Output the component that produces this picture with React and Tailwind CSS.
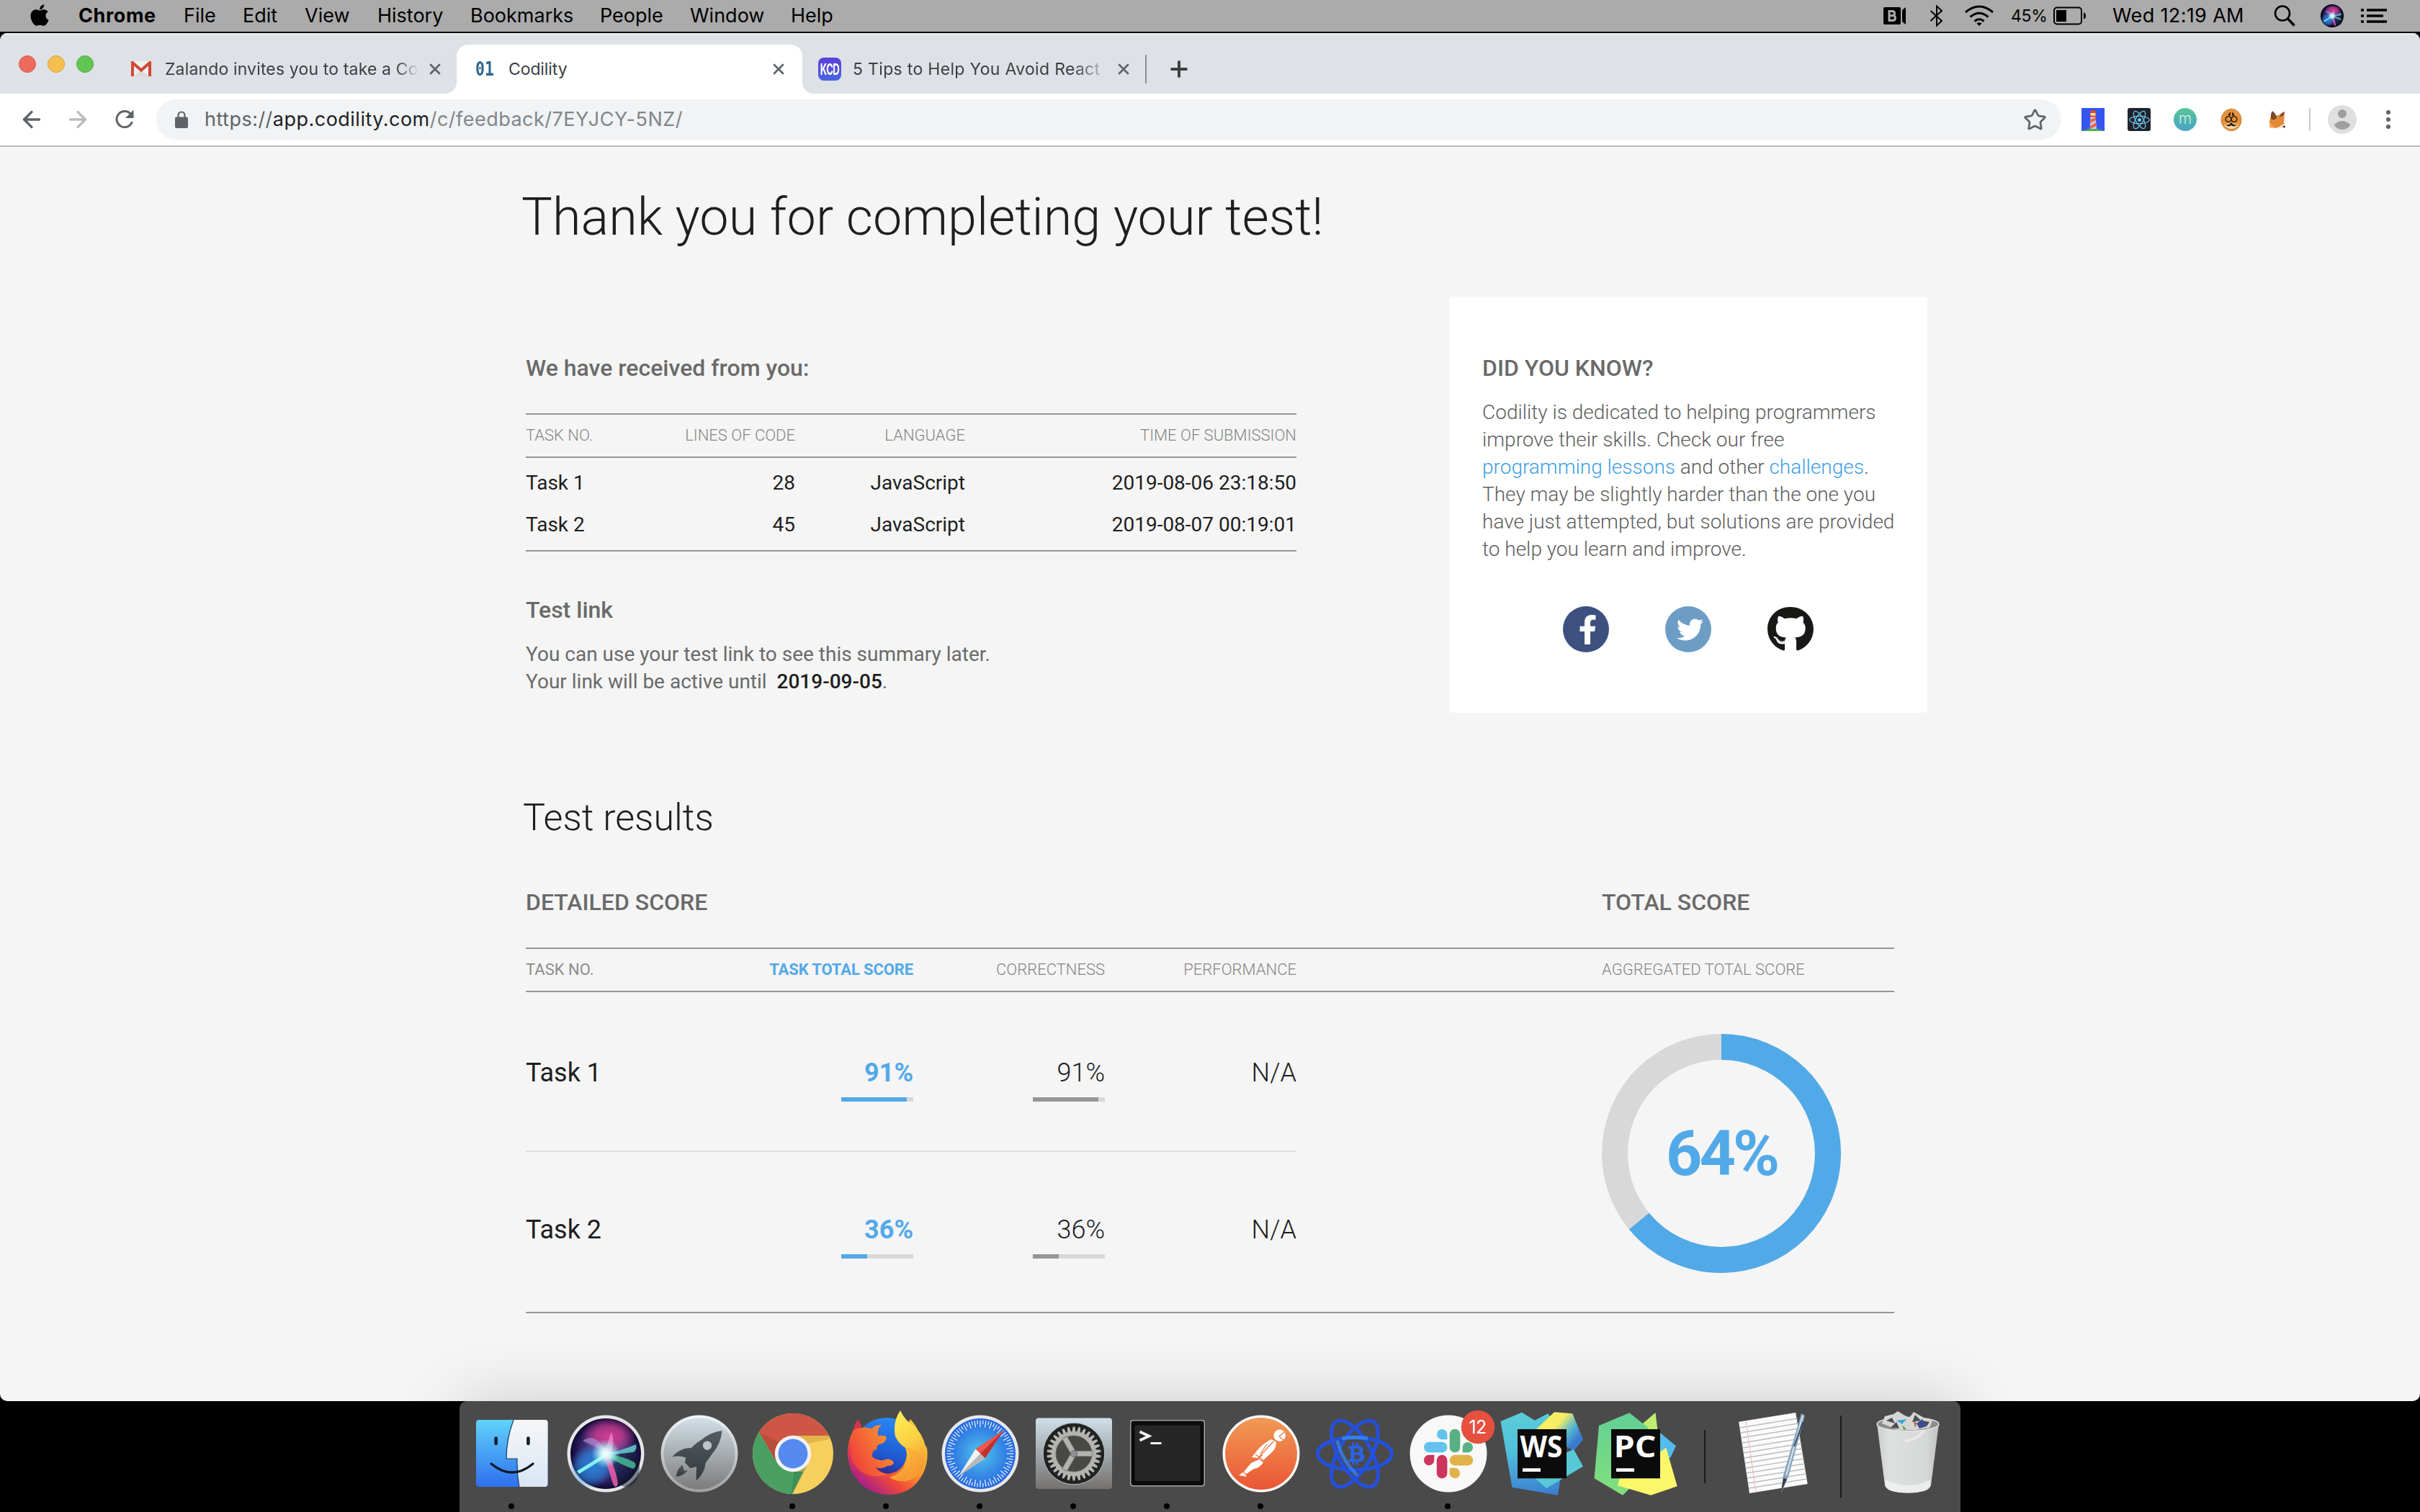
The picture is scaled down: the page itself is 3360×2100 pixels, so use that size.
import React from "react";
import { ArrowLeft, ArrowRight, Plus, Star, X } from "lucide-react";
import { FaApple, FaGithub, FaTwitter, FaReact, FaFacebookF, FaBtc } from "react-icons/fa";

const menus = [
  { label: "Chrome", cls: "w-[146px] font-bold tracking-[0.55px]" },
  { label: "File", cls: "w-[82px]" },
  { label: "Edit", cls: "w-[86px]" },
  { label: "View", cls: "w-[101px]" },
  { label: "History", cls: "w-[129px]" },
  { label: "Bookmarks", cls: "w-[180px]" },
  { label: "People", cls: "w-[125px]" },
  { label: "Window", cls: "w-[140px]" },
  { label: "Help", cls: "" },
];

function SiriOrb({ id }) {
  return (
    <g>
      <defs>
        <radialGradient id={id} cx="0.5" cy="0.5" r="0.5">
          <stop offset="0" stopColor="#5fd0e8" />
          <stop offset="0.35" stopColor="#4a4fa2" />
          <stop offset="0.8" stopColor="#2c1a58" />
          <stop offset="1" stopColor="#0c0a33" />
        </radialGradient>
        <radialGradient id={id + "p"} cx="0.5" cy="0.5" r="0.5">
          <stop offset="0" stopColor="#d43b93" />
          <stop offset="0.5" stopColor="#c43a8a" stopOpacity="0.8" />
          <stop offset="1" stopColor="#d43b93" stopOpacity="0" />
        </radialGradient>
        <radialGradient id={id + "b"} cx="0.5" cy="0.5" r="0.5">
          <stop offset="0" stopColor="#2a7fd6" />
          <stop offset="0.6" stopColor="#2a7fd6" stopOpacity="0.7" />
          <stop offset="1" stopColor="#2a7fd6" stopOpacity="0" />
        </radialGradient>
        <radialGradient id={id + "w"} cx="0.5" cy="0.5" r="0.5">
          <stop offset="0" stopColor="#fff" />
          <stop offset="0.35" stopColor="#dffcff" stopOpacity="0.85" />
          <stop offset="1" stopColor="#8ff" stopOpacity="0" />
        </radialGradient>
      </defs>
      <circle r="49" fill={"url(#" + id + ")"} />
      <ellipse cx="4" cy="-24" rx="38" ry="26" fill={"url(#" + id + "p)"} />
      <ellipse cx="-20" cy="18" rx="30" ry="30" fill={"url(#" + id + "b)"} />
      <ellipse cx="28" cy="20" rx="19" ry="26" fill="#0b1b2c" opacity="0.5" />
      <path d="M-32 -18Q-14 -30 0 -3Q-16 -10 -32 -18Z" fill="#a99be0" opacity="0.6" />
      <path d="M0 -2Q4 -22 8 -30Q14 -14 6 0Z" fill="#f08bd0" opacity="0.75" />
      <path d="M0 0Q16 -2 42 -13Q44 -5 38 -2Q20 0 2 2Z" fill="#6fe6d8" opacity="0.75" />
      <path d="M0 0Q26 4 40 12Q44 18 38 21Q22 16 0 2Z" fill="#4fd9a5" opacity="0.7" />
      <path d="M-4 0Q4 20 10 42Q14 50 17 42Q14 20 4 2Z" fill="#ef5fae" opacity="0.85" />
      <path d="M-2 0Q-16 10 -40 24L-37 28Q-14 14 4 2Z" fill="#86f3ef" />
      <circle r="20" fill={"url(#" + id + "w)"} />
    </g>
  );
}

function Finder() {
  return (
    <g>
      <defs>
        <linearGradient id="fl" x1="0" y1="0" x2="0" y2="1">
          <stop offset="0" stopColor="#5fd3fa" />
          <stop offset="1" stopColor="#2f6fee" />
        </linearGradient>
        <linearGradient id="fr" x1="0" y1="0" x2="0" y2="1">
          <stop offset="0" stopColor="#f7f7f7" />
          <stop offset="1" stopColor="#d9e5f4" />
        </linearGradient>
        <clipPath id="fc"><rect x="-50" y="-47" width="99.500" height="93" rx="4" /></clipPath>
      </defs>
      <g clipPath="url(#fc)">
        <rect x="-50" y="-47" width="100" height="93" fill="url(#fl)" />
        <path d="M2 -47Q-8 -20 -8 7H7Q6.500 28 10 47H50V-47Z" fill="url(#fr)" />
        <path d="M2 -47Q-8 -20 -8 7H7Q6.500 28 10 47" fill="none" stroke="#173a63" strokeWidth="1.200" />
      </g>
      <path d="M-22.400 -21.500V-14M22.400 -21.500V-14" stroke="#0e2030" strokeWidth="4.600" strokeLinecap="round" />
      <path d="M-29 14Q0 38 29 14" fill="none" stroke="#0e1a28" strokeWidth="3.200" strokeLinecap="round" />
    </g>
  );
}

function Siri() {
  return (
    <g>
      <circle r="53.500" fill="#e6e6e6" />
      <SiriOrb id="siri" />
    </g>
  );
}

function Launchpad() {
  return (
    <g>
      <defs>
        <linearGradient id="lp" x1="0" y1="0" x2="0" y2="1">
          <stop offset="0" stopColor="#d3dfe6" />
          <stop offset="1" stopColor="#7b7b7b" />
        </linearGradient>
        <linearGradient id="lpr" x1="0" y1="0" x2="0" y2="1">
          <stop offset="0" stopColor="#eef6fb" />
          <stop offset="1" stopColor="#a0a0a0" />
        </linearGradient>
        <linearGradient id="lpk" x1="0" y1="0" x2="0" y2="1">
          <stop offset="0" stopColor="#565b5f" />
          <stop offset="1" stopColor="#34393d" />
        </linearGradient>
      </defs>
      <circle r="53.500" fill="url(#lpr)" />
      <circle r="49.500" fill="url(#lp)" />
      <path d="M31.500 -32Q16 -30 4 -20Q-6 -14 -11 -8Q-28 -8 -37.500 4.500Q-28 2 -19 5.500L-20 12.500L-12.400 20.300L-4 18L-4.500 37.700Q8 26 8.600 12.700Q14 6 18 0Q30 -14 31.500 -32Z" fill="url(#lpk)" />
      <circle cx="11" cy="-11.300" r="6.200" fill="#bcc5ca" />
      <path d="M-23.500 15.500Q-32 22 -32 32Q-22 31 -16 22.700L-21 24Z" fill="url(#lpk)" />
    </g>
  );
}

function ChromeLogo() {
  return (
    <g>
      <defs><clipPath id="cc"><circle r="56" /></clipPath></defs>
      <g clipPath="url(#cc)">
        <rect x="-56" y="-56" width="112" height="112" fill="#f7cf5d" />
        <path d="M-60 -60H60V-25H0L-22 13L-47 -30Z" fill="#cf5645" />
        <path d="M-60 -52L-47 -30L-22 13L0 25H14L-3 60H-60Z" fill="#4aa063" />
        <path d="M0 -25H52L50 -20L20 -14Z" fill="#d9a945" opacity="0.7" />
        <path d="M-47 -30L-22 13L-25 2L-18 -16Z" fill="#a8402f" opacity="0.5" />
        <path d="M22 12L-3 60L2 22Z" fill="#2f7a49" opacity="0.45" />
      </g>
      <circle r="25.200" fill="#f3f3f3" />
      <circle r="20.400" fill="#568af0" />
    </g>
  );
}

function Firefox() {
  return (
    <g>
      <defs>
        <linearGradient id="ffb" x1="0.7" y1="0" x2="0.4" y2="1">
          <stop offset="0" stopColor="#2a8cf5" />
          <stop offset="0.6" stopColor="#1e55cf" />
          <stop offset="0.95" stopColor="#3a1266" />
        </linearGradient>
        <linearGradient id="ffo" x1="0.85" y1="0.1" x2="0.15" y2="0.85">
          <stop offset="0" stopColor="#fdc93a" />
          <stop offset="0.4" stopColor="#fb9a2c" />
          <stop offset="0.7" stopColor="#f0483a" />
          <stop offset="1" stopColor="#a91e88" />
        </linearGradient>
        <linearGradient id="ffy" x1="0" y1="0" x2="0.3" y2="1">
          <stop offset="0" stopColor="#fff45c" />
          <stop offset="0.55" stopColor="#fbd043" />
          <stop offset="1" stopColor="#f7962f" />
        </linearGradient>
        <linearGradient id="fff" x1="0" y1="0.6" x2="1" y2="0">
          <stop offset="0" stopColor="#f0443a" />
          <stop offset="1" stopColor="#fba32f" />
        </linearGradient>
      </defs>
      <circle cx="0" cy="-3" r="47" fill="url(#ffb)" />
      <path d="M33 -48Q44 -36 48 -20L56 -8Q59 14 48 32Q34 56 4 57Q-32 56 -48 26Q-58 4 -52 -18Q-50 -26 -46 -33L-30 -37Q-24 -34 -21 -31L-10 -14Q-21 -4 -20 4Q-18 24 0 28Q26 26 28 0Q26 -10 20 -22Z" fill="url(#ffo)" />
      <path d="M-46 -33Q-45 -42 -40 -47Q-35 -42 -35 -36Z" fill="#d3344a" />
      <path d="M-46 -33Q-36 -38 -21 -35Q-16 -40 -7 -40Q-14 -34 -12 -25Q-1 -26 0 -22Q-2 -13 -13 -13L-14 -5Q-24 -6 -20 4Q-14 10 -4 9Q4 5 10 12Q9 17 1 17Q-6 22 -17 19Q-10 28 2 28Q-30 40 -48 10Q-52 -16 -46 -33Z" fill="url(#fff)" />
      <path d="M19 -60Q8 -44 12 -24Q18 -12 27 -8Q32 8 22 22Q14 30 4 33Q22 44 42 32Q56 14 54 -10Q50 -28 38 -38Q24 -48 19 -60Z" fill="url(#ffy)" />
      <path d="M27 -8Q42 8 24 40Q48 30 50 6Q44 -6 27 -8Z" fill="#f6a636" opacity="0.55" />
    </g>
  );
}

const safariTicks = Array.from({ length: 72 }, (_, i) => i * 5);

function Safari() {
  return (
    <g>
      <defs>
        <radialGradient id="sf" cx="0.5" cy="0.5" r="0.5">
          <stop offset="0" stopColor="#52c5ea" />
          <stop offset="1" stopColor="#2566e2" />
        </radialGradient>
      </defs>
      <circle r="53.500" fill="#e8e8ea" />
      <circle r="49" fill="url(#sf)" />
      {safariTicks.map((a, i) => (
        <path key={a} d={i % 2 ? "M0 -46.500V-41" : "M0 -46.500V-37"} stroke="#e3f0fa" strokeWidth="1.300" transform={"rotate(" + a + ")"} />
      ))}
      <path d="M33 -33L6.500 6.500L-6.500 -6.500Z" fill="#ee564e" />
      <path d="M33 -33L6.500 6.500L0 0Z" fill="#c2302a" />
      <path d="M-30 31L-6.500 -6.500L6.500 6.500Z" fill="#f2f2f2" />
      <path d="M-30 31L0 0L6.500 6.500Z" fill="#b8b8b8" />
    </g>
  );
}

const teeth = Array.from({ length: 30 }, (_, i) => i * 12);

function Settings() {
  return (
    <g>
      <defs>
        <linearGradient id="sp" x1="0" y1="0" x2="0" y2="1">
          <stop offset="0" stopColor="#cfe0ea" />
          <stop offset="1" stopColor="#75726f" />
        </linearGradient>
        <linearGradient id="spg" x1="0" y1="0" x2="0" y2="1">
          <stop offset="0" stopColor="#c4c4c2" />
          <stop offset="1" stopColor="#8f8d8a" />
        </linearGradient>
      </defs>
      <rect x="-53" y="-49.500" width="106" height="98.500" rx="4" fill="url(#sp)" />
      <circle r="42.800" fill="#222222" stroke="#b5c4ce" strokeWidth="1" />
      {teeth.map((a) => (
        <path key={a} d="M-2.600 -30L-1.400 -37.500H1.400L2.600 -30Z" fill="#b4b3b0" transform={"rotate(" + a + ")"} />
      ))}
      <circle r="28" fill="#484846" stroke="#b4b3b0" strokeWidth="6" />
      <circle r="25" fill="none" stroke="#6b6a68" strokeWidth="1" />
      {[0, 120, 240].map((a) => (
        <path key={a} d="M0 -3.800H26V3.800H0Z" fill="#b4b2ae" stroke="#5f5e5c" strokeWidth="0.600" transform={"rotate(" + a + ")"} />
      ))}
      <circle r="4.500" fill="#8f9294" stroke="#666" strokeWidth="1" />
    </g>
  );
}

function Terminal() {
  return (
    <g>
      <rect x="-52" y="-47" width="104" height="92.500" rx="4" fill="#9fa8a6" />
      <rect x="-50.500" y="-45.500" width="101" height="89.500" rx="3" fill="#0a0a0a" />
      <rect x="-45.500" y="-39.500" width="91" height="77.500" fill="#262626" />
      <path d="M-38.500 -30.500L-25.500 -24.500L-38.500 -18.500" fill="none" stroke="#f3f3f3" strokeWidth="3.600" />
      <path d="M-23.500 -14.500H-8.500" stroke="#f3f3f3" strokeWidth="3" />
    </g>
  );
}

function Postman() {
  return (
    <g>
      <defs>
        <linearGradient id="pm" x1="0" y1="0" x2="0" y2="1">
          <stop offset="0" stopColor="#f19a55" />
          <stop offset="1" stopColor="#ea5534" />
        </linearGradient>
      </defs>
      <circle r="53.500" fill="#fdfdfd" />
      <circle r="50" fill="url(#pm)" />
      <circle cx="25.700" cy="-25.300" r="8.200" fill="#fff" />
      <path d="M25 -24L32 -30M25 -24L31 -19" stroke="#ee7a45" strokeWidth="1.400" />
      <path d="M14 -20L21 -16Q21 -8 15 -2L2 10L-4 6L-13 5L-6 -4Q2 -14 14 -20Z" fill="#fff" />
      <path d="M-3 8L3 12Q-2 20 -10 21L-22 29L-20 32L-31 30L-24 25L-14 13Z" fill="#fff" />
      <path d="M17 -17L-6 8M-8 1L4 10M-8 9L2 2M-26 24L-20 30M8 -13L-1 0" stroke="#ee7242" strokeWidth="1.300" />
    </g>
  );
}

function BitcoinAtom() {
  return (
    <g fill="none" strokeWidth="5">
      <ellipse rx="51.500" ry="22.500" stroke="#2450de" />
      <ellipse rx="51.500" ry="22.500" stroke="#2450de" transform="rotate(60)" />
      <ellipse rx="51.500" ry="22.500" stroke="#2450de" transform="rotate(120)" />
      <path d="M-18 -21.100Q0 -24 18 -21.100" stroke="#347ef2" />
      <path d="M-28 12Q0 20 28 12" stroke="#347ef2" transform="rotate(60)" opacity="0.8" />
      <path d="M-28 12Q0 20 28 12" stroke="#347ef2" transform="rotate(-60)" opacity="0" />
      <g transform="translate(-13.500 -15.500)" stroke="none"><FaBtc size={31} color="#2c63e6" /></g>
    </g>
  );
}

function Slack() {
  return (
    <g>
      <circle r="53.500" fill="#f8f8f8" />
      <path d="M-1.600 -19.700H-8.700A7.200 7.200 0 1 1 -1.600 -27Z" fill="#63c3ec" />
      <rect x="-34" y="-16.300" width="32.400" height="14.600" rx="7.300" fill="#63c3ec" />
      <rect x="1.700" y="-34.300" width="14.600" height="32.600" rx="7.300" fill="#57b182" />
      <path d="M19.700 -1.700V-9A7.200 7.200 0 1 1 27 -1.700Z" fill="#57b182" />
      <path d="M-19.700 1.800V9A7.200 7.200 0 1 1 -27 1.800Z" fill="#cc355c" />
      <rect x="-16.200" y="1.800" width="14.600" height="32.600" rx="7.300" fill="#cc355c" />
      <rect x="1.700" y="1.800" width="32.600" height="14.600" rx="7.300" fill="#e2b24a" />
      <path d="M1.700 19.800H9A7.200 7.200 0 1 1 1.700 27Z" fill="#e2b24a" />
      <circle cx="41" cy="-37" r="23.200" fill="#e6503f" />
      <text x="40.500" y="-28" textAnchor="middle" className="font-[Inter] text-[25px]" letterSpacing="-0.8" fill="#fff">12</text>
    </g>
  );
}

function IdeBox({ label }) {
  return (
    <g>
      <rect x="-34" y="-34" width="68" height="68.300" fill="#0b0b0b" />
      <text x="-30.500" y="5" textLength="59" lengthAdjust="spacingAndGlyphs" className="font-['Open_Sans'] font-bold text-[42px]" fill="#fff">{label}</text>
      <rect x="-27" y="20.300" width="25" height="4.700" fill="#fff" />
    </g>
  );
}

function WebStorm() {
  return (
    <g>
      <defs>
        <linearGradient id="ws1" x1="0.4" y1="0" x2="0.5" y2="1">
          <stop offset="0" stopColor="#5accd8" />
          <stop offset="0.45" stopColor="#52bfdc" />
          <stop offset="1" stopColor="#3b80cf" />
        </linearGradient>
        <linearGradient id="ws2" x1="0.1" y1="0.3" x2="0.8" y2="0.8">
          <stop offset="0" stopColor="#fbf060" />
          <stop offset="0.35" stopColor="#f5ec66" />
          <stop offset="0.7" stopColor="#55b8cf" />
          <stop offset="1" stopColor="#3a7ad0" />
        </linearGradient>
      </defs>
      <path d="M-57.500 -45L-28 -57.300L-10 -46.300L8 -55.700L30 -30L25 38L22 57.700L-41.600 46.700Z" fill="url(#ws1)" />
      <path d="M17 -57.700L42.300 -55.700L57 -19.700L44 -4L-8 -34Z" fill="url(#ws2)" />
      <path d="M44 -6L57 17.700L6 48L-10 34L30 0Z" fill="#58c8d6" />
      <IdeBox label="WS" />
    </g>
  );
}

function PyCharm() {
  return (
    <g>
      <defs>
        <linearGradient id="pc1" x1="0" y1="0" x2="0" y2="1">
          <stop offset="0" stopColor="#62cf94" />
          <stop offset="1" stopColor="#83e07c" />
        </linearGradient>
      </defs>
      <path d="M34 -29L56 -10.700L48 6H30Z" fill="#52bdec" />
      <path d="M27.500 -57L3 -36L30.500 -32Z" fill="#c0ec72" />
      <path d="M-51 -39L-8.700 -56.700L17.600 -36L10 30L-18 57.700L-57.500 34.300Z" fill="url(#pc1)" />
      <path d="M42.300 -8.300L57.700 45.300L21 57.700L-25 44.300L-21 30L30 0Z" fill="#fdf86a" />
      <IdeBox label="PC" />
    </g>
  );
}

const paperLines = [-36, -29, -22, -15, -8, -1, 6, 13, 20, 27, 34, 41, 48];

function TextEdit() {
  return (
    <g>
      <path d="M-47.800 -44.300L31.200 -57L47.700 42L-33 55Z" fill="#fbfbfb" />
      {paperLines.map((y) => (
        <path key={y} d={`M${-46.500 + (y + 36) * 0.150} ${y}L${33.500 + (y + 36) * 0.160} ${y - 13}`} stroke="#b9bdc0" strokeWidth="1.300" />
      ))}
      <path d="M-38 -45.500L-24 53.500" stroke="#f2b8b0" strokeWidth="1" />
      <path d="M39 -56L44 -53L21 32L11 55L14 30Z" fill="#87a2b9" />
      <path d="M41 -53L18 30" stroke="#dce8f1" strokeWidth="2" />
      <path d="M41 -44L29 -10" stroke="#35506a" strokeWidth="2" />
      <path d="M14 34L19 35L10.500 54Z" fill="#3c3c44" />
    </g>
  );
}

function Trash() {
  return (
    <g>
      <defs>
        <linearGradient id="tr" x1="0" y1="0" x2="1" y2="0">
          <stop offset="0" stopColor="#c9cbcc" />
          <stop offset="0.2" stopColor="#dfe0e0" />
          <stop offset="0.8" stopColor="#d6d7d7" />
          <stop offset="1" stopColor="#bfc1c2" />
        </linearGradient>
      </defs>
      <path d="M-43 -42L-32 44Q-30 54 0 54.500Q30 54 32 44L43 -42Z" fill="url(#tr)" />
      <ellipse cy="-41" rx="43" ry="9.500" fill="#8b8d8e" stroke="#e4e5e6" strokeWidth="1.500" />
      <path d="M-36 -42L-32 -52L-20 -55L-14 -59L-6 -54L2 -50L8 -58L22 -50L34 -46L30 -36L10 -33H-14Z" fill="#d6d6d6" />
      <path d="M-30 -46L-22 -50L-18 -42ZM6 -44L10 -54L18 -46ZM-24 -36L-16 -44L-12 -35ZM20 -46L30 -44L26 -38Z" fill="#4c4d50" />
      <path d="M-16 -46L-2 -48L-8 -41Z" fill="#3aa7d8" />
      <path d="M12 -42L20 -48L26 -38L16 -35Z" fill="#3a4f92" />
      <path d="M8 -46L12 -42L10 -36Z" fill="#c2512c" />
      <path d="M-8 -40L-2 -34L-6 -33Z" fill="#62a84e" />
      <path d="M-31 36Q0 52 31 36L31 44Q28 54 0 54.500Q-28 54 -31 44Z" fill="#f1f2f2" opacity="0.8" />
      <path d="M-4 -18Q14 -20 22 -32" stroke="#efefef" strokeWidth="4" fill="none" opacity="0.7" />
    </g>
  );
}

const dockApps = [
  { name: "Finder", Icon: Finder, open: true },
  { name: "Siri", Icon: Siri },
  { name: "Launchpad", Icon: Launchpad },
  { name: "Chrome", Icon: ChromeLogo, open: true },
  { name: "Firefox", Icon: Firefox, open: true },
  { name: "Safari", Icon: Safari, open: true },
  { name: "Settings", Icon: Settings, open: true },
  { name: "Terminal", Icon: Terminal, open: true },
  { name: "Postman", Icon: Postman, open: true },
  { name: "Bitcoin", Icon: BitcoinAtom },
  { name: "Slack", Icon: Slack, open: true },
  { name: "WebStorm", Icon: WebStorm },
  { name: "PyCharm", Icon: PyCharm },
];

function DockItem({ Icon, open }) {
  return (
    <svg className="h-[154px] w-[130px] shrink-0" viewBox="-65 -73 130 154">
      <Icon />
      {open && <circle cx="-1" cy="73" r="4" fill="#000" />}
    </svg>
  );
}

function Dock() {
  return (
    <div className="absolute bottom-0 left-[638px] flex h-[154px] w-[2084px] rounded-t-[10px] bg-[#4a4a4a] px-2 shadow-[0_0_90px_rgba(0,0,0,0.17)]">
      {dockApps.map((a) => <DockItem key={a.name} Icon={a.Icon} open={a.open} />)}
      <div className="flex w-[61px] shrink-0 justify-center pt-10"><div className="h-[74px] w-[2px] bg-[#1c1c1c]" /></div>
      <DockItem Icon={TextEdit} />
      <div className="flex w-[57px] shrink-0 justify-center pt-5"><div className="h-[114px] w-[2px] bg-[#1c1c1c]" /></div>
      <DockItem Icon={Trash} />
    </div>
  );
}

function MenuBar() {
  return (
    <div className="flex h-[44px] shrink-0 items-center bg-[#ababab] font-[Inter] text-[27px] leading-[44px] text-black">
      <div className="flex w-[109px] shrink-0 pl-[39px]">
        <FaApple className="h-[34px] w-[32px] -translate-y-px" />
      </div>
      {menus.map((m) => <span key={m.label} className={"shrink-0 " + (m.cls)}>{m.label}</span>)}
      <div className="ml-auto flex items-center">
        <svg className="h-[26px] w-[64px]" viewBox="0 0 64 26">
          <rect y="1" width="24" height="24" rx="1.500" fill="#000" />
          <path d="M31 1V25L26 21V5Z" fill="#000" />
          <path d="M8 6.500V19.500H12.500Q16.500 19.500 16.500 16T12.500 12.700Q15.500 12.500 15.500 9.500T12 6.500ZM8 12.700H12.500" fill="none" stroke="#ababab" strokeWidth="3" />
        </svg>
        <svg className="h-[32px] w-[48px]" viewBox="0 0 48 32">
          <path d="M1.500 9L17 23L10 29.500V2.500L17 9L1.500 23" fill="none" stroke="#000" strokeWidth="2" />
        </svg>
        <svg className="h-[30px] w-[65px]" viewBox="0 0 65 30" fill="none" stroke="#000" strokeWidth="3">
          <path d="M2 10Q21 -6 40 10M8.500 16.500Q21 6 33.500 16.500M14.500 22.500Q21 17 27.500 22.500" />
          <path d="M21 29L17.500 25.500Q21 23 24.500 25.500Z" fill="#000" stroke="none" />
        </svg>
        <span className="w-[59px] text-[23px] tracking-[-0.3px]">45%</span>
        <svg className="h-[26px] w-[82px]" viewBox="0 0 82 26">
          <rect x="1" y="1.500" width="38" height="23" rx="4" fill="none" stroke="#000" strokeWidth="2" />
          <rect x="4" y="5" width="14" height="16" fill="#000" />
          <path d="M42 8.500Q45 9 45 13T42 17.500Z" fill="#000" />
        </svg>
        <span className="w-[224px] whitespace-nowrap tracking-[0.35px]">Wed 12:19 AM</span>
        <svg className="h-[30px] w-[65px]" viewBox="0 0 65 30" fill="none" stroke="#000" strokeWidth="2.600">
          <circle cx="12" cy="11.500" r="10" /><path d="M19 18.500L28.500 28.500" strokeWidth="3.400" />
        </svg>
        <svg className="h-[32px] w-[56px]" viewBox="-53 -53 185.500 106">
          <circle r="53" fill="#000" /><SiriOrb id="siriMenu" />
        </svg>
        <svg className="h-[22px] w-[82px]" viewBox="0 0 82 22">
          <path d="M0 3H4M0 11H4M0 19H4M8 3H36M8 11H31M8 19H36" stroke="#000" strokeWidth="3.600" />
        </svg>
      </div>
    </div>
  );
}

function CloseX() {
  return <X className="size-[24px] shrink-0 text-[#5f6368]" strokeWidth={2.700} />;
}

function TabStrip() {
  return (
    <div className="flex h-[84px] shrink-0 items-end border-t-2 border-[#eceef1] bg-[#dee1e6] font-[Inter] text-[23px] text-[#3c4043]">
      <div className="flex h-full w-[182px] items-center gap-4 pl-[26px]">
        <span className="size-6 rounded-full border border-[#d65a50] bg-[#ed6a5e]" />
        <span className="size-6 rounded-full border border-[#d8a13c] bg-[#f5bf4f]" />
        <span className="size-6 rounded-full border border-[#58a942] bg-[#62c655]" />
      </div>
      <div className="flex h-[68px] w-[452px] items-center">
        <svg className="h-[22px] w-7 shrink-0" viewBox="0 0 28 22">
          <rect x="2" width="24" height="21" fill="#eeeeee" />
          <path d="M4 21L14 12L24 21Z" fill="#dcdcdc" />
          <path d="M2 21V2L14 12.500L26 2V21" fill="none" stroke="#d14836" strokeWidth="4" />
        </svg>
        <span className="ml-[19px] w-[363px] shrink-0 whitespace-nowrap tracking-[0.15px] [mask-image:linear-gradient(90deg,#000_322px,transparent_352px)]">Zalando invites you to take a Co</span>
        <CloseX />
      </div>
      <div className="relative flex h-[68px] w-[480px] items-center rounded-t-2xl bg-white pl-[26px] before:absolute before:bottom-0 before:-left-4 before:size-4 before:bg-[radial-gradient(circle_at_0_0,transparent_15.5px,#fff_16.5px)] after:absolute after:-right-4 after:bottom-0 after:size-4 after:bg-[radial-gradient(circle_at_100%_0,transparent_15.5px,#fff_16.5px)]">
        <span className="w-[46px]"><span className="inline-block origin-left scale-x-[0.8] font-['DejaVu_Sans_Mono'] text-[27px] font-bold text-[#2f6690]">01</span></span>
        <span className="w-[363px] tracking-[-0.1px]">Codility</span>
        <CloseX />
      </div>
      <div className="flex h-[68px] items-center pl-[22px]">
        <span className="flex h-8 w-8 items-center justify-center overflow-hidden rounded-lg bg-gradient-to-b from-[#5a3fd8] to-[#4a63e0] text-[22px] font-bold tracking-[-1px] text-white"><span className="shrink-0 scale-x-[0.6]">KCD</span></span>
        <span className="ml-[16px] w-[348px] whitespace-nowrap tracking-[0.32px] [mask-image:linear-gradient(90deg,#000_88%,transparent_103%)]">5 Tips to Help You Avoid React</span>
        <span className="ml-[16px]"><CloseX /></span>
        <span className="ml-[18px] h-10 w-[2px] bg-[#8d9196]" />
        <Plus className="ml-7 size-[34px] text-[#3c4043]" strokeWidth={2.800} />
      </div>
    </div>
  );
}

function Toolbar() {
  return (
    <div className="flex h-[74px] shrink-0 items-center border-b-2 border-[#b8b9bb] bg-white font-[Inter]">
      <ArrowLeft className="ml-[26px] size-9 shrink-0 text-[#5f6368]" strokeWidth={2.200} />
      <ArrowRight className="ml-7 size-9 shrink-0 text-[#babcbe]" strokeWidth={2.200} />
      <svg className="ml-[31px] h-[28px] w-[30px] shrink-0" viewBox="0 0 30 28">
        <path d="M24.500 6.500A11 11 0 1 0 26.500 17" fill="none" stroke="#5f6368" strokeWidth="2.900" />
        <path d="M28.500 0.500V12H17Z" fill="#5f6368" />
      </svg>
      <div className="ml-[30px] flex h-14 w-[2645px] shrink-0 items-center rounded-full bg-[#f1f3f4] pr-[20px] pl-[26px]">
        <svg className="h-[24px] w-[18px]" viewBox="0 0 18 24">
          <rect y="8.500" width="18" height="15.500" rx="2" fill="#5f6368" />
          <path d="M4.500 10V6A4.500 4.500 0 0 1 13.500 6V10" fill="none" stroke="#5f6368" strokeWidth="2.200" />
        </svg>
        <span className="ml-[23px] text-[27px] leading-[56px] tracking-[0.480px] text-[#80868b]"><span className="text-[#5f6368]">https://</span><span className="text-[#202124]">app.codility.com</span>/c/feedback/7EYJCY-5NZ/</span>
        <Star className="ml-auto size-[33px] text-[#5f6368]" strokeWidth={2} />
      </div>
      <div className="ml-[28px] flex shrink-0 items-center gap-8">
        <svg className="size-8" viewBox="0 0 32 32">
          <rect width="32" height="32" fill="#3555f0" />
          <path d="M0 32Q16 25 32 32Z" fill="#4caf50" />
          <path d="M12.500 12H19.500L21 29H11.500Z" fill="#c5c9ea" />
          <path d="M12.500 16L20 13V17L12 21ZM12 25L20.500 20V25L12 29Z" fill="#ee6243" />
          <rect x="12.500" y="7" width="7" height="4" fill="#fde68a" />
          <path d="M12 7V4.500Q16 1 20 4.500V7Z" fill="#e2452c" /><rect x="11.500" y="10.500" width="9" height="2" fill="#e2452c" />
        </svg>
        <span className="flex size-8 items-center justify-center rounded-[3px] bg-[#20232a]"><FaReact className="size-[29px] text-[#6fc7ee]" /></span>
        <span className="flex size-8 items-center justify-center rounded-full bg-gradient-to-b from-[#56c596] to-[#4aa3c4] pb-[3px] text-[21px] font-extralight text-white">m</span>
        <svg className="size-8" viewBox="0 0 32 32">
          <ellipse cx="16" cy="16.500" rx="14" ry="15.200" fill="#e8923c" stroke="#b87430" strokeWidth="0.800" />
          <path d="M6 24Q16 34 26 24Q16 18 6 24Z" fill="#f8d9a8" />
          <path d="M11 10L15 5V11ZM21 10L17 5V11Z" fill="#2d2118" />
          <circle cx="12" cy="15.500" r="3.800" fill="#e8923c" stroke="#2d2118" strokeWidth="1.600" /><circle cx="20" cy="15.500" r="3.800" fill="#e8923c" stroke="#2d2118" strokeWidth="1.600" />
          <path d="M8 23.500Q13 24 16 20Q19 24 24 23.500Q19 27 16 24Q13 27 8 23.500Z" fill="#2d2118" />
        </svg>
        <svg className="size-8" viewBox="0 0 32 32">
          <path d="M5 18L8 10Q16 13 26 5L25 20L27 26L22 28L5 27Z" fill="#e28a35" />
          <path d="M9 4Q15 9 15 14Q11 18 7 15Q6 9 9 4ZM26 5Q20 7 19 12L24 11Z" fill="#7a4a2c" />
          <path d="M5 20L14 28L5 27Z" fill="#f2a54c" /><path d="M15 28L25 22L27 26L22 28Z" fill="#f7e6d0" /><path d="M23 25L27 25L26 28Z" fill="#222" />
        </svg>
      </div>
      <span className="ml-[28px] h-8 w-[2px] shrink-0 bg-[#c9cccf]" />
      <svg className="ml-[24px] size-10 shrink-0" viewBox="0 0 40 40">
        <circle cx="20" cy="20" r="20" fill="#dfdfdf" /><circle cx="20" cy="12" r="6" fill="#9e9e9e" />
        <path d="M8.500 27.500Q14 22 20 22T31.500 27.500Q27 34 20 34T8.500 27.500Z" fill="#9e9e9e" />
      </svg>
      <svg className="ml-[41px] h-[28px] w-[6px] shrink-0" viewBox="0 0 6 28" fill="#5f6368"><circle cx="3" cy="4" r="3" /><circle cx="3" cy="14" r="3" /><circle cx="3" cy="24" r="3" /></svg>
    </div>
  );
}

const submissions = [
  ["Task 1", "28", "JavaScript", "2019-08-06 23:18:50"],
  ["Task 2", "45", "JavaScript", "2019-08-07 00:19:01"],
];

function Submissions() {
  return (
    <div className="mt-[43px] border-y-2 border-[#969696] whitespace-nowrap">
      <div className="grid h-[60px] grid-cols-[160px_214px_236px_460px] border-b-2 border-[#969696] text-right text-[22px] leading-[58px] font-light text-[#868686]">
        <span className="text-left">TASK NO.</span><span>LINES OF CODE</span><span>LANGUAGE</span><span>TIME OF SUBMISSION</span>
      </div>
      <div className="py-[6px] text-[28px] leading-[58px] text-[#1e1e1e]">
        {submissions.map((r) => (
          <div key={r[0]} className="grid grid-cols-[160px_214px_236px_460px] text-right">
            <span className="text-left">{r[0]}</span><span>{r[1]}</span><span>{r[2]}</span><span>{r[3]}</span>
          </div>
        ))}
      </div>
    </div>
  );
}

function DidYouKnow() {
  return (
    <div className="ml-[212px] h-[578px] w-[664px] shrink-0 rounded-md bg-white px-[46px] pt-[79px] text-[#6a6a6a]">
      <h2 className="text-[32px] leading-10 font-medium">DID YOU KNOW?</h2>
      <p className="mt-[23px] text-[28px] leading-[38px] font-light whitespace-nowrap text-[#5e5e5e]">
        Codility is dedicated to helping programmers<br />
        improve their skills. Check our free<br />
        <a className="text-[#3f9fe5]">programming lessons</a> and other <a className="text-[#3f9fe5]">challenges</a>.<br />
        They may be slightly harder than the one you<br />
        have just attempted, but solutions are provided<br />
        to help you learn and improve.
      </p>
      <div className="mt-[60px] flex justify-center gap-[78px]">
        <span className="flex size-16 items-center justify-center rounded-full bg-[#3d5080] pl-1"><FaFacebookF className="size-[41px] text-white" /></span>
        <span className="flex size-16 items-center justify-center rounded-full bg-[#6d9dc5] pl-1"><FaTwitter className="size-[37px] text-white" /></span>
        <FaGithub className="size-16 scale-x-[1.03] text-[#181816]" />
      </div>
    </div>
  );
}

function ScoreCell({ value, blue }) {
  return (
    <div className="flex flex-col items-end">
      <span className={blue ? "font-bold text-[#52a9e8]" : "font-light"}>{value}%</span>
      <div className="mt-3 h-[6px] w-[100px] bg-[#d8d8d8]">
        <div className={blue ? "h-full bg-[#52a9e8]" : "h-full bg-[#969696]"} style={{ width: value + "%" }} />
      </div>
    </div>
  );
}

function ScoreRow({ name, value, cls }) {
  return (
    <div className={"grid grid-cols-[272px_266px_266px_266px] text-[36px] leading-[44px] text-[#1e1e1e] " + (cls)}>
      <span>{name}</span>
      <ScoreCell value={value} blue />
      <ScoreCell value={value} />
      <span className="text-right font-light">N/A</span>
    </div>
  );
}

function Results() {
  const circumference = 2 * Math.PI * 148;
  return (
    <section>
      <h2 className="mt-[116px] -ml-[4px] text-[52px] leading-[60px] font-light text-[#1e1e1e]">Test results</h2>
      <div className="mt-[67px] flex text-[32px] leading-10 font-medium text-[#6a6a6a]">
        <span className="w-[1494px]">DETAILED SCORE</span><span>TOTAL SCORE</span>
      </div>
      <div className="mt-[43px] flex h-[62px] w-[1900px] border-y-2 border-[#969696] text-[22px] leading-[58px] font-light text-[#868686]">
        <div className="grid w-[1070px] grid-cols-[272px_266px_266px_266px] text-right">
          <span className="text-left font-normal text-[#8c8c8c]">TASK NO.</span>
          <span className="font-bold tracking-[-0.12px] text-[#52a9e8]">TASK TOTAL SCORE</span>
          <span>CORRECTNESS</span><span>PERFORMANCE</span>
        </div>
        <span className="ml-[424px]">AGGREGATED TOTAL SCORE</span>
      </div>
      <div className="flex h-[446px] w-[1900px] border-b-2 border-[#969696]">
        <div className="w-[1070px]">
          <ScoreRow name="Task 1" value={91} cls="h-[222px] border-b-2 border-[#e0e0e0] pt-[90px]" />
          <ScoreRow name="Task 2" value={36} cls="pt-[86px]" />
        </div>
        <div className="mt-[58px] ml-[424px] grid size-[332px] place-items-center">
          <svg className="col-start-1 row-start-1 size-[332px] -rotate-90" viewBox="-166 -166 332 332" fill="none" strokeWidth="36">
            <circle r="148" stroke="#d8d8d8" />
            <circle r="148" stroke="#52a9e8" strokeDasharray={`${circumference * 0.640} ${circumference}`} />
          </svg>
          <span className="col-start-1 row-start-1 text-[88px] leading-none font-bold tracking-[-4px] text-[#52a9e8]">64%</span>
        </div>
      </div>
    </section>
  );
}

export default function App() {
  return (
    <div className="relative flex h-[2100px] w-[3360px] flex-col overflow-hidden bg-black">
      <MenuBar />
      <div className="mt-[2px] flex h-[1900px] shrink-0 flex-col overflow-hidden rounded-[10px] bg-[#f5f5f5]">
        <TabStrip />
        <Toolbar />
        <main className="pl-[730px] font-['Roboto']">
          <h1 className="-ml-[6px] pt-[56px] text-[72px] leading-[84px] font-light text-[#1e1e1e]">Thank you for completing your test!</h1>
          <div className="mt-[68px] flex">
            <div className="w-[1070px] pt-[79px] text-[#6a6a6a]">
              <h2 className="text-[32px] leading-10 font-medium">We have received from you:</h2>
              <Submissions />
              <h2 className="mt-[61px] text-[32px] leading-10 font-medium">Test link</h2>
              <p className="mt-[23px] text-[28px] leading-[38px]">
                You can use your test link to see this summary later.<br />
                Your link will be active until&nbsp; <span className="font-medium text-[#1e1e1e]">2019-09-05</span>.
              </p>
            </div>
            <DidYouKnow />
          </div>
          <Results />
        </main>
      </div>
      <Dock />
    </div>
  );
}
